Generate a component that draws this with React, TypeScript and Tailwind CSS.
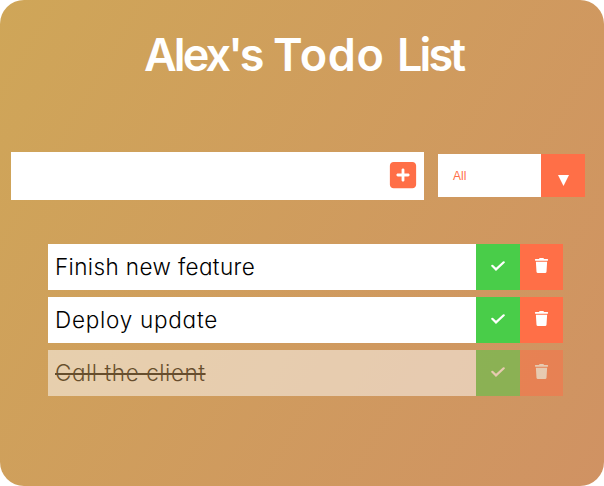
import { FaTrash } from "react-icons/fa";
import { FaSquarePlus } from "react-icons/fa6";

type Todo = { text: string; done: boolean; tracking: string };

const todos: Todo[] = [
  { text: "Finish new feature", done: false, tracking: "tracking-[0.38px]" },
  { text: "Deploy update", done: false, tracking: "tracking-[0.75px]" },
  { text: "Call the client", done: true, tracking: "tracking-[0.56px]" },
];

function CheckIcon() {
  return (
    <svg width="14" height="10" viewBox="0 0 14 10" fill="none" className="stroke-white">
      <path d="M1.3 4.8L5 8.4L12.7 1.3" strokeWidth="2.2" strokeLinecap="round" />
    </svg>
  );
}

function TodoRow({ text, done, tracking }: Todo) {
  return (
    <li className={`flex h-[46px] w-[515px] bg-white text-black ${done ? "opacity-50" : ""}`}>
      <span className="flex flex-1 items-center pl-[7px]">
        <span
          className={`text-[22.5px] leading-none font-[350] whitespace-pre [font-feature-settings:'cv11'] ${tracking} ${
            done ? "line-through decoration-2" : ""
          }`}
        >
          {text}
        </span>
      </span>
      <button className="flex w-11 items-center justify-center bg-[#49cd49] pb-[2px] text-white">
        <CheckIcon />
      </button>
      <button className="flex w-[43px] items-center justify-center bg-[#ff6f47] pb-[3px] text-white">
        <FaTrash size={15} />
      </button>
    </li>
  );
}

export default function App() {
  return (
    <div className="h-[486px] w-[604px] bg-white font-['Inter',sans-serif]">
      <main className="flex h-full flex-col overflow-hidden rounded-[24px] bg-linear-[120deg,#cfa658,#d09263]">
        <header className="flex h-[152px] pt-[33px] pl-[144px]">
          <h1 className="flex text-[45px] leading-[44px] font-semibold whitespace-nowrap text-white">
            <span className="w-[129px] tracking-[-2.9px]">Alex's </span>
            <span className="w-[124px] tracking-[0.6px]">Todo </span>
            <span className="tracking-[-2.9px]">List</span>
          </h1>
        </header>
        <form className="flex h-12 items-center pl-[11px]">
          <div className="flex h-12 w-[413px] items-start justify-end bg-white pt-[8px] pr-[7px]">
            <FaSquarePlus size={30} className="-mr-px text-[#ff6f47]" />
          </div>
          <div className="mb-[2px] ml-[14.4px] flex h-[43px] w-[147px] bg-white">
            <span className="flex-1 pt-[13px] pl-[14.6px] font-['Liberation_Sans',sans-serif] text-[12px] leading-[18px] text-[#ff6f47]">
              All
            </span>
            <span className="flex w-[44px] justify-center bg-[#ff6f47] pt-[21px]">
              <svg width="11" height="11" viewBox="0 0 11 11" className="fill-white">
                <path d="M0 0H11L5.5 11Z" />
              </svg>
            </span>
          </div>
        </form>
        <ul className="mt-11 ml-12 flex flex-col gap-[7px]">
          {todos.map((todo) => (
            <TodoRow key={todo.text} {...todo} />
          ))}
        </ul>
      </main>
    </div>
  );
}
